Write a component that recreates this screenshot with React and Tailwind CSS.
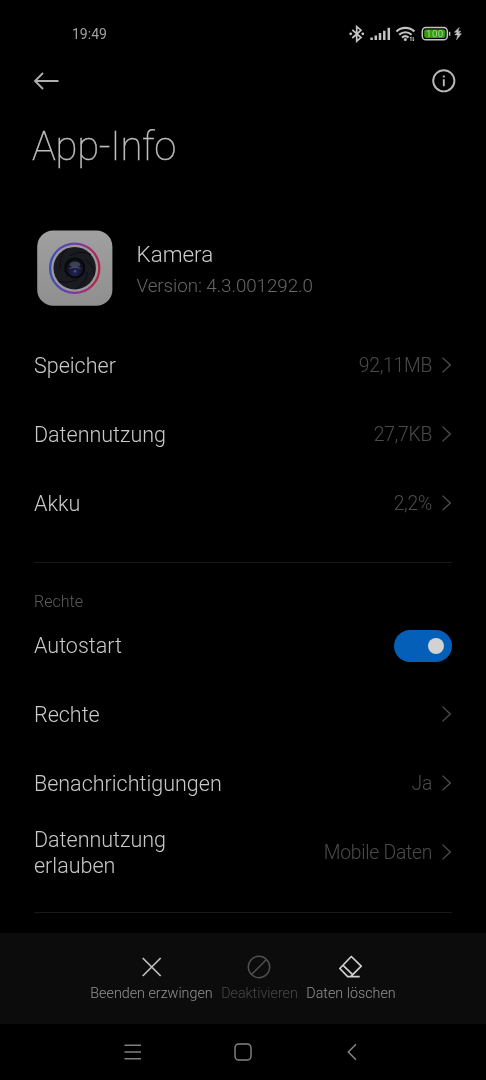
import React, { useState } from 'react';

const details = [
  { id: 'storage', title: 'Speicher', value: '92,11MB' },
  { id: 'data', title: 'Datennutzung', value: '27,7KB' },
  { id: 'battery', title: 'Akku', value: '2,2%' },
];

const permissions = [
  { id: 'permissions', title: 'Rechte', value: '' },
  { id: 'notifications', title: 'Benachrichtigungen', value: 'Ja' },
  { id: 'restrict', title: 'Datennutzung erlauben', value: 'Mobile Daten' },
];

function StatusIcons() {
  return (
    <svg width="114" height="20" viewBox="348 24 114 20" fill="none" stroke="#c4c4c4">
      {/* Bluetooth */}
      <path d="M352.3 29.8l8.7 7.8-4.3 3.6v-14.6l4.3 3.6-8.7 7.8" strokeWidth="1.7" />
      <circle cx="350.7" cy="33.8" r="1.4" fill="#c4c4c4" stroke="none" />
      <circle cx="362.8" cy="33.8" r="1.4" fill="#c4c4c4" stroke="none" />
      {/* Signal */}
      <path d="M371.6 40v-2.5M375.8 40v-4.5M380 40v-7M384.3 40v-9.3M388.8 40v-12.3" strokeWidth="2.5" />
      {/* Wifi */}
      <path d="M396.4 31.5a13 13 0 0 1 18 0M399.2 34.8a9 9 0 0 1 12.4 0M402 37.6a5 5 0 0 1 6.6 0" strokeWidth="2.1" />
      <circle cx="405.3" cy="39.4" r="1.5" fill="#c4c4c4" stroke="none" />
      <path d="M411 41v-4.2l-1 1.2M413.2 37v4l1-1.2" strokeWidth="1" />
      {/* Battery */}
      <rect x="422.3" y="27.6" width="25" height="12.2" rx="3.6" strokeWidth="1.5" />
      <rect x="424.2" y="29.5" width="21.2" height="8.4" rx="1.8" fill="#359a0c" stroke="none" />
      <text x="434.9" y="37.2" textAnchor="middle" fontSize="9.8" fontWeight="400" letterSpacing="0.4" fill="#a8d293" stroke="none">
        100
      </text>
      <path d="M449.6 31.8v4" strokeWidth="1.4" />
      {/* Charging bolt */}
      <path d="M459.3 27.3l-5 5h3l-2.6 2.6h3l-1.2 5.1 5-6.4h-3l2.4-2.4h-2.9z" fill="#c4c4c4" stroke="#c4c4c4" strokeWidth="0.4" />
    </svg>
  );
}

function CameraIcon() {
  return (
    <svg width="76" height="76" viewBox="0 0 76 76" className="shrink-0">
      <defs>
        <linearGradient id="tile" x1="0" y1="0" x2="0" y2="1">
          <stop offset="0" stopColor="#a0a0a0" />
          <stop offset="1" stopColor="#8f8f8f" />
        </linearGradient>
        <linearGradient id="ring" x1="0" y1="0.45" x2="1" y2="0.55">
          <stop offset="0" stopColor="#3d51b4" />
          <stop offset="0.5" stopColor="#783aa5" />
          <stop offset="0.8" stopColor="#a82c6e" />
          <stop offset="1" stopColor="#b92245" />
        </linearGradient>
        <radialGradient id="lens" cx="0.5" cy="0.72" r="0.6">
          <stop offset="0" stopColor="#25255c" />
          <stop offset="0.6" stopColor="#15172f" />
          <stop offset="1" stopColor="#0e1016" />
        </radialGradient>
      </defs>
      <rect x="0.2" y="0.5" width="75.2" height="75.2" rx="16" fill="url(#tile)" />
      <circle cx="37.7" cy="38.2" r="24.6" fill="#9a9a9a" stroke="url(#ring)" strokeWidth="2.3" />
      <circle cx="37.7" cy="38.2" r="21.2" fill="#191b21" />
      <path d="M30 18.6q-8 7-6.5 20M54 24.5q-10-5-21 1.2M57.5 45q-1-10-9.8-16M39 59q10-5 11.5-17M21 51q9 3 20-1.5" fill="none" stroke="#0a0b0e" strokeWidth="0.9" />
      <circle cx="37.9" cy="38" r="10.6" fill="#07080d" />
      <circle cx="37.9" cy="38" r="8.4" fill="url(#lens)" />
      <ellipse cx="37.9" cy="34.5" rx="5.4" ry="3" fill="#3d4150" />
      <path d="M32.2 38.4q5.7-2.6 11.4 0" fill="none" stroke="#555869" strokeWidth="0.9" />
      <circle cx="38" cy="41.2" r="1.2" fill="#4c4d9e" />
    </svg>
  );
}

function Chevron() {
  return (
    <svg width="10" height="16" viewBox="0 0 10 16" fill="none" stroke="#505050" strokeWidth="1.3" className="mb-0.5 ml-[10px]">
      <path d="M0.5 0.6l7.8 7.4-7.8 7.4" />
    </svg>
  );
}

function Row({ title, value }) {
  return (
    <button className="flex h-[69px] w-full items-center justify-between text-left">
      <span className="w-[190px] text-[21.5px] leading-[26px] text-[#c9c9c9]">{title}</span>
      <span className="flex items-center text-[19.3px] tracking-[-0.25px] text-[#4b4b4b]">
        <span className="pt-px">{value}</span>
        <Chevron />
      </span>
    </button>
  );
}

function Toggle({ checked, onChange }) {
  return (
    <button
      role="switch"
      aria-checked={checked}
      aria-label="Autostart"
      onClick={() => onChange(!checked)}
      className={`mb-px flex h-8 w-[58px] items-center rounded-full px-2 ${checked ? 'justify-end bg-[#035fb8]' : 'justify-start bg-[#333333]'}`}
    >
      <span className="h-4 w-4 rounded-full bg-[#d2d2d2]" />
    </button>
  );
}

function App() {
  const [autostart, setAutostart] = useState(true);

  return (
    <div className="flex h-[1080px] w-[486px] flex-col overflow-hidden bg-black font-['Roboto',sans-serif] font-light antialiased will-change-transform">
      <header className="flex h-[68px] shrink-0 items-center justify-between pr-6 pl-[72px]">
        <span className="text-[14px] font-normal text-[#a0a0a0]">19:49</span>
        <StatusIcons />
      </header>

      <main className="flex h-[865px] shrink-0 flex-col px-[34px]">
        <div className="-mr-1 -ml-[1px] flex h-[26px] items-center justify-between">
          <svg width="26" height="18" viewBox="0 0 26 18" fill="none" stroke="#b0b0b0" strokeWidth="1.8">
            <path d="M25.5 9H2M10 1L2 9l8 8" />
          </svg>
          <svg width="26" height="26" viewBox="0 0 26 26" fill="none" stroke="#b8b8b8" strokeWidth="1.9">
            <circle cx="13.8" cy="12.8" r="10.6" />
            <path d="M13.8 11.2v7M13.8 7.4v2.2" />
          </svg>
        </div>

        <h1 className="mt-[29px] -ml-0.5 h-12 text-[40px] leading-[48px] font-thin tracking-[-0.3px] text-[#c0c0c0] [-webkit-text-stroke:0.35px_#c0c0c0]">
          App-Info
        </h1>

        <section className="mt-[59px] ml-[3px] flex h-[76px] items-center">
          <CameraIcon />
          <div className="mt-[3px] ml-[23.5px]">
            <h2 className="text-[22.4px] leading-[32px] text-[#cccccc]">Kamera</h2>
            <p className="text-[18.8px] leading-[32px] tracking-[-0.06px] text-[#666666]">Version: 4.3.001292.0</p>
          </div>
        </section>

        <section className="mt-[25px]">
          {details.map((item) => (
            <Row key={item.id} title={item.title} value={item.value} />
          ))}
        </section>

        <hr className="mt-6 border-[#191919]" />

        <h3 className="mt-[28.5px] h-5 text-[16px] leading-5 text-[#5c5c5c]">Rechte</h3>
        <section>
          <div className="flex h-[69px] items-center justify-between">
            <span className="text-[21.5px] leading-[26px] text-[#c9c9c9]">Autostart</span>
            <Toggle checked={autostart} onChange={setAutostart} />
          </div>
          {permissions.map((item) => (
            <Row key={item.id} title={item.title} value={item.value} />
          ))}
        </section>

        <hr className="mt-[24.5px] border-[#191919]" />
      </main>

      <div className="flex h-[91px] shrink-0 justify-center gap-[8.5px] bg-[#0c0c0c] pt-[22px] text-[14.3px] leading-5">
        <button className="flex flex-col items-center gap-1 text-[#929292]">
          <svg width="24" height="24" viewBox="0 0 24 24" fill="none" stroke="#c0c0c0" strokeWidth="1.7">
            <path d="M2.7 3l18 18M20.7 3l-18 18" />
          </svg>
          Beenden erzwingen
        </button>
        <button className="flex flex-col items-center gap-1 text-[#494949]">
          <svg width="24" height="24" viewBox="0 0 24 24" fill="none" stroke="#505050" strokeWidth="1.5">
            <circle cx="12" cy="12" r="10.7" />
            <path d="M4.5 19.5l15-15" />
          </svg>
          Deaktivieren
        </button>
        <button className="flex flex-col items-center gap-1 text-[#929292]">
          <svg width="24" height="24" viewBox="0 0 24 24" fill="none" stroke="#d0d0d0" strokeWidth="1.7" strokeLinejoin="round">
            <path d="M12.3 1.5L22.2 11.2 11.7 21.7H8.7L0.8 13.5zM4.1 10.3l10 9.8M8.7 21.7h12" />
          </svg>
          Daten löschen
        </button>
      </div>

      <nav className="flex h-14 shrink-0 items-center pl-[124px]">
        <svg width="18" height="18" viewBox="0 0 18 18" fill="none" stroke="#808080" strokeWidth="1.4">
          <path d="M0.5 2.2h16.5M0.5 9h16.5M0.5 15.8h16.5" />
        </svg>
        <svg width="18" height="18" viewBox="0 0 18 18" fill="none" stroke="#858585" strokeWidth="1.4" className="ml-[92px]">
          <rect x="1" y="1" width="16" height="16" rx="3.8" />
        </svg>
        <svg width="10" height="18" viewBox="0 0 10 18" fill="none" stroke="#858585" strokeWidth="1.5" className="ml-[95px]">
          <path d="M9 1.3L1.3 9 9 16.7" />
        </svg>
      </nav>
    </div>
  );
}

export default App;
